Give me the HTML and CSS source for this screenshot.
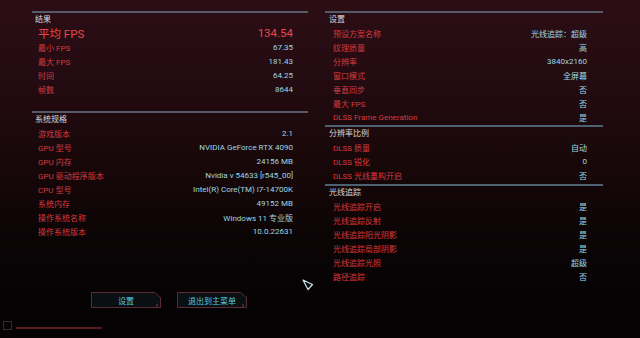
FILE: index.html
```html
<!DOCTYPE html>
<html lang="zh-CN">
<head>
<meta charset="utf-8">
<title>基准测试结果</title>
<link rel="stylesheet" href="styles.css">
</head>
<body>
<main class="screen">
  <div class="columns">
    <section class="panel panel-left">
      <div class="group">
        <div class="group-title">结果</div>
        <div class="row row-big"><span class="k">平均 FPS</span><span class="v">134.54</span></div>
        <div class="row"><span class="k">最小 FPS</span><span class="v">67.35</span></div>
        <div class="row"><span class="k">最大 FPS</span><span class="v">181.43</span></div>
        <div class="row"><span class="k">时间</span><span class="v">64.25</span></div>
        <div class="row"><span class="k">帧数</span><span class="v">8644</span></div>
      </div>
      <div class="group group-spaced">
        <div class="group-title">系统规格</div>
        <div class="row"><span class="k">游戏版本</span><span class="v">2.1</span></div>
        <div class="row"><span class="k">GPU 型号</span><span class="v">NVIDIA GeForce RTX 4090</span></div>
        <div class="row"><span class="k">GPU 内存</span><span class="v">24156 MB</span></div>
        <div class="row"><span class="k">GPU 驱动程序版本</span><span class="v">Nvidia v 54633 [r545_00]</span></div>
        <div class="row"><span class="k">CPU 型号</span><span class="v">Intel(R) Core(TM) i7-14700K</span></div>
        <div class="row"><span class="k">系统内存</span><span class="v">49152 MB</span></div>
        <div class="row"><span class="k">操作系统名称</span><span class="v">Windows 11 专业版</span></div>
        <div class="row"><span class="k">操作系统版本</span><span class="v">10.0.22631</span></div>
      </div>
    </section>
    <section class="panel panel-right">
      <div class="group">
        <div class="group-title">设置</div>
        <div class="row"><span class="k">预设方案名称</span><span class="v">光线追踪：超级</span></div>
        <div class="row"><span class="k">纹理质量</span><span class="v">高</span></div>
        <div class="row"><span class="k">分辨率</span><span class="v">3840x2160</span></div>
        <div class="row"><span class="k">窗口模式</span><span class="v">全屏幕</span></div>
        <div class="row"><span class="k">垂直同步</span><span class="v">否</span></div>
        <div class="row"><span class="k">最大 FPS</span><span class="v">否</span></div>
        <div class="row"><span class="k">DLSS Frame Generation</span><span class="v">是</span></div>
      </div>
      <div class="group group-tight">
        <div class="group-title">分辨率比例</div>
        <div class="row"><span class="k">DLSS 质量</span><span class="v">自动</span></div>
        <div class="row"><span class="k">DLSS 锐化</span><span class="v">0</span></div>
        <div class="row"><span class="k">DLSS 光线重构开启</span><span class="v">否</span></div>
      </div>
      <div class="group group-tight2">
        <div class="group-title">光线追踪</div>
        <div class="row"><span class="k">光线追踪开启</span><span class="v">是</span></div>
        <div class="row"><span class="k">光线追踪反射</span><span class="v">是</span></div>
        <div class="row"><span class="k">光线追踪阳光阴影</span><span class="v">是</span></div>
        <div class="row"><span class="k">光线追踪局部阴影</span><span class="v">是</span></div>
        <div class="row"><span class="k">光线追踪光照</span><span class="v">超级</span></div>
        <div class="row"><span class="k">路径追踪</span><span class="v">否</span></div>
      </div>
    </section>
  </div>

  <div class="actions">
    <button class="btn btn-short">
      <svg class="btn-frame" width="70" height="16" viewBox="0 0 70 16"><polygon points="0.5,0.5 63.5,0.5 69.5,5.5 69.5,15.5 0.5,15.5" fill="#0a0f14" stroke="#5a2c34" stroke-width="1"/><line x1="66" y1="12" x2="66" y2="15" stroke="#7a3a44"/></svg>
      <span class="btn-label">设置</span>
    </button>
    <button class="btn btn-long">
      <svg class="btn-frame" width="70" height="16" viewBox="0 0 70 16"><polygon points="0.5,0.5 63.5,0.5 69.5,5.5 69.5,15.5 0.5,15.5" fill="#0a0f14" stroke="#5a2c34" stroke-width="1"/><line x1="66" y1="12" x2="66" y2="15" stroke="#7a3a44"/></svg>
      <span class="btn-label">退出到主菜单</span>
    </button>
  </div>

  <div class="footer">
    <span class="footer-box"></span>
    <span class="footer-line"></span>
  </div>

  <svg class="cursor" width="12" height="12" viewBox="0 0 12 12"><polygon points="1,1 10.5,5.5 6,10.5" fill="#0b0c10" stroke="#c6e6ee" stroke-width="1.2" stroke-linejoin="round"/></svg>
</main>
</body>
</html>
```

FILE: styles.css
```css
html, body {
  margin: 0;
  padding: 0;
  background: #050203;
}

.screen {
  position: relative;
  width: 640px;
  height: 338px;
  overflow: hidden;
  background: linear-gradient(180deg, #2c0e15 0%, #230b11 25%, #170709 50%, #0a0405 72%, #040203 100%);
  font-family: Roboto, "Noto Sans CJK SC", sans-serif;
  font-size: 8px;
  color: #9bd6df;
}

.columns {
  display: flex;
  align-items: flex-start;
  gap: 17px;
  padding: 11px 0 0 32px;
  height: 272px;
}

.panel-left {
  width: 276px;
}

.panel-right {
  width: 278px;
}

.group {
  border-top: 2px solid #555a68;
}

.group-spaced {
  margin-top: 15px;
}

.group-tight {
  margin-top: 1px;
  border-top-color: #4c6270;
}

.group-tight2 {
  margin-top: 2px;
  border-top-color: #4c6270;
}

.group-title {
  height: 13px;
  line-height: 13px;
  padding-left: 3px;
  color: #d9d9dc;
  font-size: 8px;
}

.panel-right .group-title {
  padding-left: 4px;
}

.row {
  display: flex;
  justify-content: space-between;
  align-items: center;
  height: 14px;
  padding: 0 15px 0 6px;
}

.panel-right .row {
  padding: 0 16px 0 8px;
}

.k {
  color: #d8393d;
  white-space: nowrap;
}

.v {
  color: #9fd8e2;
  white-space: nowrap;
}

.row-big .k,
.row-big .v {
  color: #ee4446;
  font-size: 11.5px;
}

.actions {
  display: flex;
  gap: 16px;
  padding-left: 91px;
  margin-top: 9px;
}

.btn {
  position: relative;
  width: 70px;
  height: 16px;
  padding: 0;
  border: 0;
  background: none;
  font: inherit;
  display: flex;
  align-items: center;
  justify-content: center;
}

.btn-frame {
  position: absolute;
  left: 0;
  top: 0;
}

.btn-label {
  position: relative;
  color: #5cc9dc;
  font-size: 8px;
}

.footer {
  display: flex;
  align-items: flex-end;
  gap: 4px;
  margin-top: 13px;
  padding-left: 3px;
  height: 9px;
}

.footer-box {
  width: 7px;
  height: 7px;
  border: 1px solid #3a2a2e;
}

.footer-line {
  width: 86px;
  height: 2px;
  margin-bottom: 1px;
  background: #5a1a1e;
}

.cursor {
  position: absolute;
  left: 302px;
  top: 279px;
}
```
